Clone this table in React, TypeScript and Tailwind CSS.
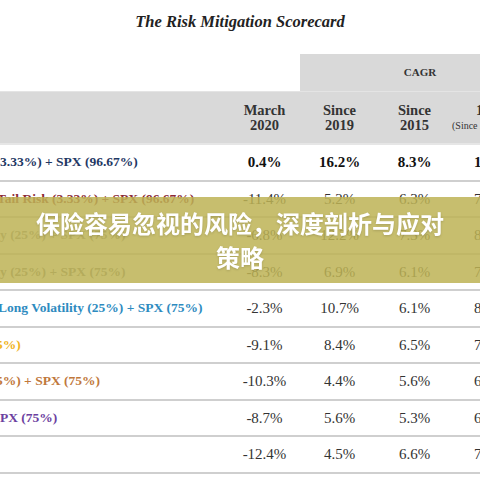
import React from 'react';

const rows = [
  { label: '3.33%) + SPX (96.67%)', color: 'text-[#1f3864]', shift: 'ml-0', vals: ['0.4%', '16.2%', '8.3%', '11.5%'], bold: true },
  { label: 'Tail Risk (3.33%) + SPX (96.67%)', color: 'text-[#8b2a35]', shift: '-ml-[3px]', vals: ['-11.4%', '5.2%', '6.3%', '7.6%'] },
  { label: 'y (25%) + SPX (75%)', color: 'text-[#8f8f8f]', shift: 'ml-0', vals: ['-6.8%', '12.2%', '7.3%', '8.4%'] },
  { label: 'y (25%) + SPX (75%)', color: 'text-[#7d7d7d]', shift: 'ml-0', vals: ['-8.3%', '6.9%', '6.1%', '7.2%'] },
  { label: 'Long Volatility (25%) + SPX (75%)', color: 'text-[#2e8bbf]', shift: '-ml-[2px]', vals: ['-2.3%', '10.7%', '6.1%', '8.1%'] },
  { label: '5%)', color: 'text-[#f0b41c]', shift: '-ml-[4px]', vals: ['-9.1%', '8.4%', '6.5%', '7.4%'] },
  { label: '5%) + SPX (75%)', color: 'text-[#c0783c]', shift: '-ml-[4px]', vals: ['-10.3%', '4.4%', '5.6%', '6.8%'] },
  { label: 'PX (75%)', color: 'text-[#6b3fa0]', shift: 'ml-0', vals: ['-8.7%', '5.6%', '5.3%', '6.9%'] },
  { label: '', color: 'text-[#333]', shift: 'ml-0', vals: ['-12.4%', '4.5%', '6.6%', '7.7%'] },
];

export default function App() {
  return (
    <div className="relative w-[480px] h-[480px] overflow-hidden bg-white font-['Liberation_Serif',serif] text-[#333]">
      {/* title */}
      <div className="h-[54px] pt-[12px] text-center text-[16.5px] leading-[20px] font-bold italic text-[#222]">
        The Risk Mitigation Scorecard
      </div>

      {/* CAGR band */}
      <div className="flex h-[37px]">
        <div className="w-[300px] shrink-0" />
        <div className="w-[240px] shrink-0 bg-[#d9d9d9] flex items-center justify-center text-[11px] font-bold text-[#333]">
          CAGR
        </div>
      </div>
      <div className="h-px bg-[#e4e4e4]" />

      {/* header row */}
      <div className="flex h-[51px] bg-[#d9d9d9] items-center text-[14.5px] leading-[15px] font-bold text-[#333] border-b-2 border-[#e6e6e6] box-content">
        <div className="w-[227px] shrink-0" />
        {['March|2020', 'Since|2019', 'Since|2015'].map((h) => (
          <div key={h} className="w-[75px] shrink-0 text-center">
            <div>{h.split('|')[0]}</div>
            <div>{h.split('|')[1]}</div>
          </div>
        ))}
        <div className="w-[100px] shrink-0 whitespace-nowrap">
          <div className="pl-[24px]">11 Years</div>
          <div className="text-[10px] font-normal leading-[15px]">(Since 2009)</div>
        </div>
      </div>

      {/* data rows */}
      {rows.map((r, i) => (
        <div key={i} className="flex h-[34.5px] items-center border-b-2 border-[#cfcfcf] box-content">
          <div className={`w-[227px] shrink-0 overflow-hidden whitespace-nowrap text-[13.5px] font-bold ${r.color}`}>
            <span className={`block ${r.shift}`}>{r.label}</span>
          </div>
          {r.vals.slice(0, 3).map((v, j) => (
            <div key={j} className={`w-[75px] shrink-0 text-center text-[15px] ${r.bold ? 'font-bold text-[#111]' : 'text-[#333]'}`}>
              {v}
            </div>
          ))}
          <div className={`w-[100px] shrink-0 pl-[22px] whitespace-nowrap text-[15px] ${r.bold ? 'font-bold text-[#111]' : 'text-[#333]'}`}>
            {r.vals[3]}
          </div>
        </div>
      ))}

      {/* banner overlay */}
      <div className="absolute left-0 right-0 top-[197px] h-[86px] bg-[#bdb355]/85 flex items-center justify-center">
        <div className="w-[420px] text-center text-white font-bold text-[24px] leading-[34px] font-['Noto_Sans_CJK_SC',sans-serif] drop-shadow-[0_1px_1px_rgba(0,0,0,0.15)]">
          保险容易忽视的风险，深度剖析与应对策略
        </div>
      </div>
    </div>
  );
}
